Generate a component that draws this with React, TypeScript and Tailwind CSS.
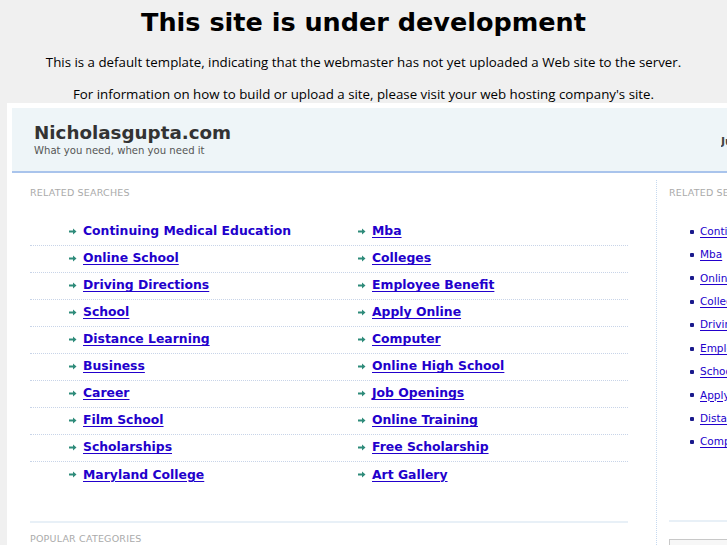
const ROWS: [string, string][] = [
  ['Continuing Medical Education', 'Mba'],
  ['Online School', 'Colleges'],
  ['Driving Directions', 'Employee Benefit'],
  ['School', 'Apply Online'],
  ['Distance Learning', 'Computer'],
  ['Business', 'Online High School'],
  ['Career', 'Job Openings'],
  ['Film School', 'Online Training'],
  ['Scholarships', 'Free Scholarship'],
  ['Maryland College', 'Art Gallery'],
];

const SIDE = [
  'Continuing Medical Education',
  'Mba',
  'Online School',
  'Colleges',
  'Driving Directions',
  'Employee Benefit',
  'School',
  'Apply Online',
  'Distance Learning',
  'Computer',
];

function Arrow() {
  return (
    <svg width="8" height="7" viewBox="0 0 8 7" className="shrink-0">
      <path d="M0 2.5h4V0.5L7.5 3.5 4 6.5V4.5H0z" fill="#2e8b7a" />
    </svg>
  );
}

function LinkCell({ label, hover }: { label: string; hover?: boolean }) {
  return (
    <span className="flex items-center gap-[6px]">
      <Arrow />
      <a
        href="#"
        className={
          'whitespace-nowrap text-[12.4px] font-bold text-[#2200cc] ' +
          (hover ? 'no-underline' : 'underline decoration-1 underline-offset-[2px]')
        }
      >
        {label}
      </a>
    </span>
  );
}

export default function App() {
  return (
    <div className="h-[545px] w-[727px] overflow-hidden bg-[#f0f0f0] font-['DejaVu_Sans',sans-serif]">
      <div className="flex flex-col items-center pt-[6px]">
        <h1 className="text-[25.5px] font-bold leading-[32px] text-black">
          This site is under development
        </h1>
        <p className="mt-[15px] whitespace-nowrap font-['Open_Sans',sans-serif] text-[13.3px] leading-[18px] text-black">
          This is a default template, indicating that the webmaster has not yet uploaded a Web site to the server.
        </p>
        <p className="mt-[14px] whitespace-nowrap font-['Open_Sans',sans-serif] text-[13.3px] leading-[18px] text-black">
          For information on how to build or upload a site, please visit your web hosting company's site.
        </p>
      </div>

      <div className="ml-[7px] h-[450px] w-[740px] bg-white pl-[5px] pt-[5px]">
        {/* header strip */}
        <div className="flex h-[65px] items-start justify-between border-b-2 border-[#a9c4ec] bg-[#eef5f8] pl-[22px]">
          <div className="pt-[14px]">
            <div className="text-[18.3px] font-bold leading-[22px] text-[#333]">Nicholasgupta.com</div>
            <div className="mt-[1px] text-[10.1px] leading-[12px] text-[#555]">What you need, when you need it</div>
          </div>
          <div className="w-[26px] overflow-hidden whitespace-nowrap pt-[26px] text-[11px] font-bold text-[#444]">
            Ju
          </div>
        </div>

        <div className="flex">
          {/* main column */}
          <div className="w-[616px] shrink-0 pl-[18px]">
            <div className="pt-[14px] text-[9.5px] uppercase leading-[12px] tracking-[0.2px] text-[#aaa]">
              Related Searches
            </div>
            <div className="mt-[19.5px] w-[598px]">
              {ROWS.map(([a, b], i) => (
                <div
                  key={a}
                  className={
                    'grid h-[27px] grid-cols-[328px_1fr] items-center ' +
                    (i < ROWS.length - 1 ? 'border-b border-dotted border-[#c8d4e8]' : '')
                  }
                >
                  <div className="pl-[39px]">
                    <LinkCell label={a} hover={i === 0} />
                  </div>
                  <div>
                    <LinkCell label={b} />
                  </div>
                </div>
              ))}
            </div>
            <div className="mt-[32px] h-[2px] w-[598px] bg-[#e8f0f7]" />
            <div className="mt-[10px] text-[9.5px] uppercase leading-[12px] tracking-[0.2px] text-[#aaa]">
              Popular Categories
            </div>
          </div>

          {/* side column */}
          <div className="ml-[28px] mt-[7px] flex-1 border-l border-dotted border-[#c6d9f0] pl-[12px]">
            <div className="whitespace-nowrap pt-[7px] text-[9.5px] uppercase leading-[12px] tracking-[0.2px] text-[#aaa]">
              Related Searches
            </div>
            <ul className="mt-[21px]">
              {SIDE.map((s) => (
                <li key={s} className="flex h-[23.4px] items-center gap-[6px] pl-[21px]">
                  <span className="h-[4px] w-[4px] shrink-0 rounded-[1px] bg-[#1a1a8c]" />
                  <a href="#" className="whitespace-nowrap text-[10.5px] text-[#2200cc] underline underline-offset-[2px]">
                    {s}
                  </a>
                </li>
              ))}
            </ul>
            <div className="mt-[66px] h-[2px] w-full bg-[#e8f0f7]" />
            <div className="mt-[17px] h-[20px] w-full border border-[#c8c8c8] bg-[#f7f7f7]" />
          </div>
        </div>
      </div>
    </div>
  );
}
